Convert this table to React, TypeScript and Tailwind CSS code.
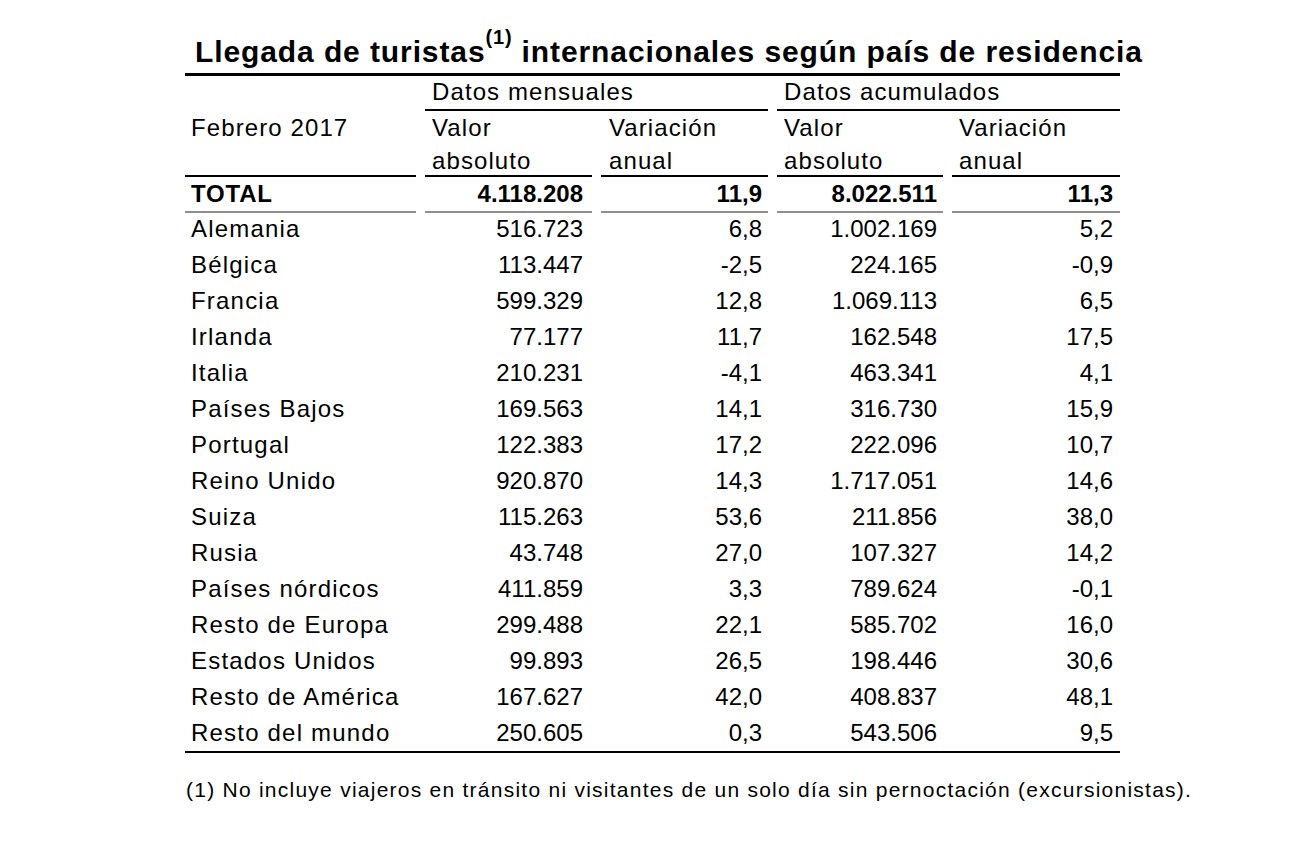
import React from "react";

const rows: string[][] = [
  ["Alemania", "516.723", "6,8", "1.002.169", "5,2"],
  ["Bélgica", "113.447", "-2,5", "224.165", "-0,9"],
  ["Francia", "599.329", "12,8", "1.069.113", "6,5"],
  ["Irlanda", "77.177", "11,7", "162.548", "17,5"],
  ["Italia", "210.231", "-4,1", "463.341", "4,1"],
  ["Países Bajos", "169.563", "14,1", "316.730", "15,9"],
  ["Portugal", "122.383", "17,2", "222.096", "10,7"],
  ["Reino Unido", "920.870", "14,3", "1.717.051", "14,6"],
  ["Suiza", "115.263", "53,6", "211.856", "38,0"],
  ["Rusia", "43.748", "27,0", "107.327", "14,2"],
  ["Países nórdicos", "411.859", "3,3", "789.624", "-0,1"],
  ["Resto de Europa", "299.488", "22,1", "585.702", "16,0"],
  ["Estados Unidos", "99.893", "26,5", "198.446", "30,6"],
  ["Resto de América", "167.627", "42,0", "408.837", "48,1"],
  ["Resto del mundo", "250.605", "0,3", "543.506", "9,5"],
];

const grid = "grid grid-cols-[231px_167px_167px_166px_168px] gap-x-[9px]";
const pads = ["pr-[9px]", "pr-[6px]", "pr-[6px]", "pr-[7px]"];

export default function App() {
  return (
    <div className="min-h-[846px] w-full bg-white text-black font-['Liberation_Sans',Arial,sans-serif]">
      <div className="w-[935px] ml-[185px]">
        {/* Title */}
        <div className="pt-[35px] pb-[4px] border-b-[3px] border-black pl-[10px] whitespace-nowrap text-[30px] leading-[34px] font-bold tracking-[0.9px]">
          Llegada de turistas
          <sup className="top-[-18px] text-[20px] tracking-[0.8px]">(1)</sup>{" "}
          internacionales según país de residencia
        </div>

        {/* Header row 1 */}
        <div className={`${grid} text-[24px] tracking-[1.1px]`}>
          <div className="h-[35px]" />
          <div className="col-span-2 h-[35px] border-b-2 border-black pl-[7px] pt-[1px] leading-[30px]">
            Datos mensuales
          </div>
          <div className="col-span-2 h-[35px] border-b-2 border-black pl-[7px] pt-[1px] leading-[30px]">
            Datos acumulados
          </div>
        </div>

        {/* Header row 2 */}
        <div className={`${grid} text-[24px] leading-[33px] tracking-[1.1px]`}>
          <div className="h-[66px] border-b-2 border-black pl-[6px]">Febrero 2017</div>
          <div className="h-[66px] border-b-2 border-black pl-[7px]">
            Valor
            <br />
            absoluto
          </div>
          <div className="h-[66px] border-b-2 border-black pl-[8px]">
            Variación
            <br />
            anual
          </div>
          <div className="h-[66px] border-b-2 border-black pl-[7px]">
            Valor
            <br />
            absoluto
          </div>
          <div className="h-[66px] border-b-2 border-black pl-[7px]">
            Variación
            <br />
            anual
          </div>
        </div>

        {/* TOTAL row */}
        <div className={`${grid} text-[24px] leading-[34px] font-bold`}>
          <div className="h-[36px] border-b-2 border-[#8e8e8e] pl-[6px] tracking-[0.8px]">TOTAL</div>
          {["4.118.208", "11,9", "8.022.511", "11,3"].map((v, i) => (
            <div key={i} className={`h-[36px] border-b-2 border-[#8e8e8e] text-right ${pads[i]}`}>
              {v}
            </div>
          ))}
        </div>

        {/* Data rows */}
        <div className="border-b-2 border-black">
          {rows.map((r, idx) => (
            <div
              key={r[0]}
              className={`${grid} text-[24px] leading-[32px] ${idx === rows.length - 1 ? "h-[34px]" : "h-[36px]"}`}
            >
              <div className="pl-[6px] tracking-[1.2px] whitespace-nowrap">{r[0]}</div>
              {r.slice(1).map((v, i) => (
                <div key={i} className={`text-right ${pads[i]}`}>
                  {v}
                </div>
              ))}
            </div>
          ))}
        </div>

        {/* Footnote */}
        <div className="mt-[23px] pl-[1px] text-[21px] leading-[28px] tracking-[1.25px] whitespace-nowrap">
          (1) No incluye viajeros en tránsito ni visitantes de un solo día sin pernoctación (excursionistas).
        </div>
      </div>
    </div>
  );
}
